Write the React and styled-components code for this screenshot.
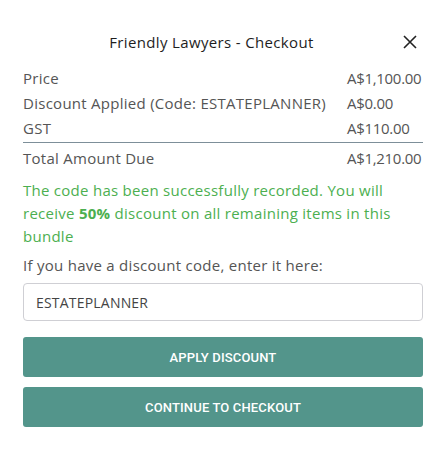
import React from "react";
import styled, { createGlobalStyle } from "styled-components";

const Global = createGlobalStyle`
  html, body { margin: 0; padding: 0; background: #fff; }
  body { font-family: "Open Sans", "Liberation Sans", sans-serif; }
  * { box-sizing: border-box; }
`;

const Modal = styled.div`
  width: 446px;
  padding: 29px 23px 29px;
  display: flex;
  flex-direction: column;
`;

const Header = styled.div`
  display: flex;
  align-items: center;
  height: 26px;
  margin-bottom: 10px;
`;

const Title = styled.h2`
  flex: 1;
  margin: 0;
  text-align: center;
  font-size: 15px;
  font-weight: 500;
  color: #1e1e1e;
  letter-spacing: 0.35px;
`;

const Close = styled.button`
  width: 23px;
  height: 16px;
  padding: 0 5px 0 2px;
  border: 0;
  background: none;
  display: flex;
  cursor: pointer;
`;

const Table = styled.div`
  display: flex;
  flex-direction: column;
`;

const Row = styled.div`
  display: flex;
  justify-content: space-between;
  align-items: center;
  height: ${(p) => (p.$total ? "28px" : "25px")};
  margin-top: ${(p) => (p.$total ? "2px" : "0")};
  font-size: 15px;
  letter-spacing: 0.27px;
  color: #555;
  border-top: ${(p) => (p.$total ? "1px solid #7d8f99" : "none")};
  padding-top: ${(p) => (p.$total ? "2px" : "0")};
`;

const Value = styled.span`
  flex-shrink: 0;
  width: 76px;
  white-space: nowrap;
  letter-spacing: -0.3px;
`;

const Success = styled.p`
  margin: 9px 0 0;
  font-size: 15px;
  letter-spacing: 0.27px;
  line-height: 23px;
  color: #4caf50;
  b { font-weight: 700; }
`;

const Label = styled.label`
  display: block;
  margin-top: 6px;
  font-size: 15px;
  letter-spacing: 0.27px;
  line-height: 23px;
  color: #555;
`;

const Input = styled.input`
  margin-top: 6px;
  height: 38px;
  width: 100%;
  border: 1px solid #cfcfd4;
  border-radius: 4px;
  padding: 0 12px;
  font-family: inherit;
  font-size: 14px;
  letter-spacing: 0.2px;
  color: #444;
  outline: none;
`;

const Button = styled.button`
  margin-top: ${(p) => p.$gap}px;
  height: 40px;
  width: 100%;
  border: 0;
  border-radius: 3px;
  background: #53958b;
  color: #fff;
  font-family: Roboto, "Liberation Sans", sans-serif;
  font-weight: 500;
  font-size: 13px;
  letter-spacing: 0.15px;
  text-transform: uppercase;
  cursor: pointer;
`;

export default function App() {
  return (
    <>
      <Global />
      <Modal>
        <Header>
          <Title>Friendly Lawyers - Checkout</Title>
          <Close aria-label="Close">
            <svg width="16" height="16" viewBox="0 0 16 16">
              <path d="M2 2 L14 14 M14 2 L2 14" stroke="#222" strokeWidth="1.6" fill="none" />
            </svg>
          </Close>
        </Header>
        <Table>
          <Row>
            <span>Price</span>
            <Value>A$1,100.00</Value>
          </Row>
          <Row>
            <span>Discount Applied (Code: ESTATEPLANNER)</span>
            <Value>A$0.00</Value>
          </Row>
          <Row>
            <span>GST</span>
            <Value>A$110.00</Value>
          </Row>
          <Row $total>
            <span>Total Amount Due</span>
            <Value>A$1,210.00</Value>
          </Row>
        </Table>
        <Success>
          The code has been successfully recorded. You will receive <b>50%</b> discount on all remaining items in this bundle
        </Success>
        <Label htmlFor="code">If you have a discount code, enter it here:</Label>
        <Input id="code" defaultValue="ESTATEPLANNER" />
        <Button $gap={16}>Apply Discount</Button>
        <Button $gap={10}>Continue to Checkout</Button>
      </Modal>
    </>
  );
}
